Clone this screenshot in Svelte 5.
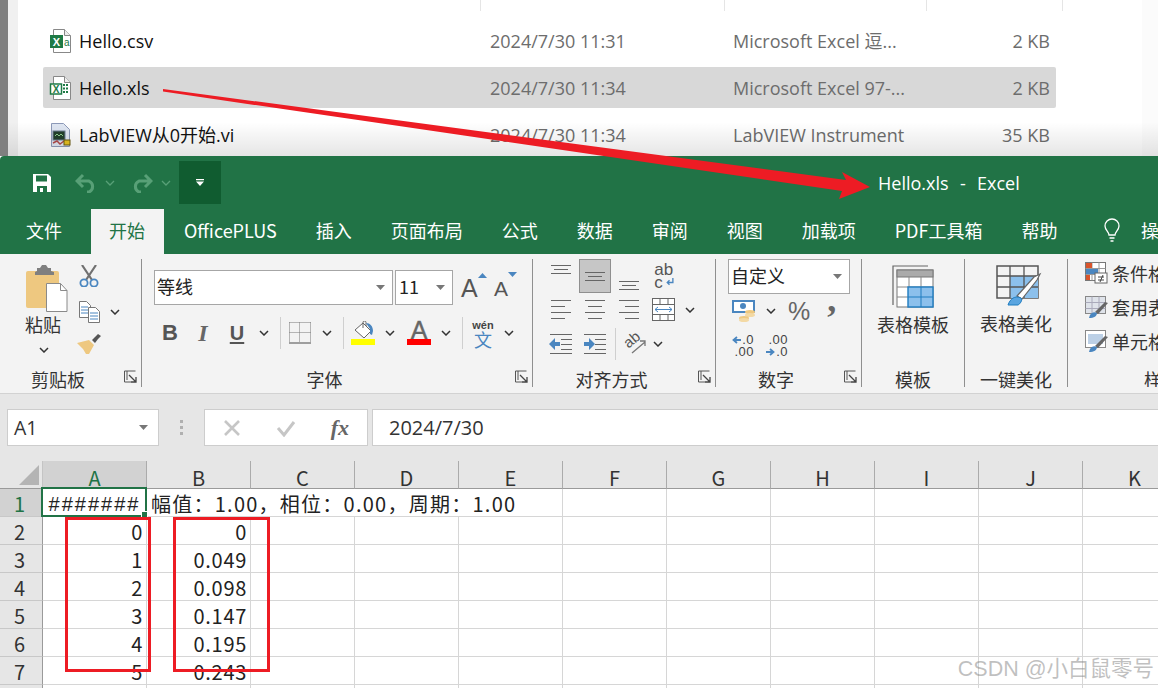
<script>
  const files = [
    { name: 'Hello.csv', date: '2024/7/30 11:31', type: 'Microsoft Excel 逗...', size: '2 KB', icon: 'csv' },
    { name: 'Hello.xls', date: '2024/7/30 11:34', type: 'Microsoft Excel 97-...', size: '2 KB', icon: 'xls', selected: true },
    { name: 'LabVIEW从0开始.vi', date: '2024/7/30 11:34', type: 'LabVIEW Instrument', size: '35 KB', icon: 'vi' }
  ];
  const tabs = ['文件', '开始', 'OfficePLUS', '插入', '页面布局', '公式', '数据', '审阅', '视图', '加载项', 'PDF工具箱', '帮助'];
  const cols = ['A', 'B', 'C', 'D', 'E', 'F', 'G', 'H', 'I', 'J', 'K'];
  const rows = [
    [2, '0', '0'],
    [3, '1', '0.049'],
    [4, '2', '0.098'],
    [5, '3', '0.147'],
    [6, '4', '0.195'],
    [7, '5', '0.243'],
    [8, '', '']
  ];
</script>

{#snippet chev()}
  <svg class="chev" width="10" height="6" viewBox="0 0 10 6"><path d="M1 1l4 4 4-4" fill="none" stroke="#333" stroke-width="1.5"/></svg>
{/snippet}

{#snippet drop()}
  <svg width="9" height="5" viewBox="0 0 9 5"><path d="M0 0h9L4.500 5z" fill="#777"/></svg>
{/snippet}

{#snippet launcher()}
  <svg class="launcher" width="13" height="13" viewBox="0 0 13 13"><path d="M.5 12V1h11M3 1v9M.5 12H7" fill="none" stroke="#555"/><path d="M5 5l7 7M12 7v5H7" fill="none" stroke="#444" stroke-width="1.300"/></svg>
{/snippet}

{#snippet lines(kind)}
  <svg width="22" height="22" viewBox="0 0 22 22">
    <g stroke="#666" stroke-width="1">
      {#if kind === 'left'}
        <path d="M1 1.500h20M1 7.500h14M1 13.500h20M1 19.500h14"/>
      {:else if kind === 'center'}
        <path d="M1 1.500h20M4 7.500h14M1 13.500h20M4 19.500h14"/>
      {:else}
        <path d="M1 1.500h20M7 7.500h14M1 13.500h20M7 19.500h14"/>
      {/if}
    </g>
  </svg>
{/snippet}

{#snippet indent(flip)}
  <svg width="24" height="22" viewBox="0 0 24 22">
    <path d="M1 1.500h22M12 6.500h11M12 11.500h11M12 16.500h11M1 20.500h22" stroke="#666" fill="none"/>
    {#if flip}
      <path d="M1 9h5V5l6 6-6 6v-4H1z" fill="#4a86c0"/>
    {:else}
      <path d="M11 9H6V5l-6 6 6 6v-4h5z" fill="#4a86c0"/>
    {/if}
  </svg>
{/snippet}

{#snippet fileIcon(kind)}
  <svg class="ficon" width="22" height="24" viewBox="0 0 22 24">
    {#if kind === 'vi'}
      <path d="M2.500.5h12l6 6v17h-18z" fill="#dfe6f2" stroke="#8d9ab8"/>
      <rect x="4" y="8" width="12" height="9" fill="#22402c" stroke="#6b7a92"/>
      <path d="M6 13l2-2 2 2 2-2 2 2" stroke="#8fd08f" fill="none"/>
      <path d="M4 20l4-2 3 3 4-3" stroke="#b04a4a" stroke-width="1.500" fill="none"/>
      <rect x="15" y="17" width="6" height="5" fill="#e6c020" stroke="#6b5a10"/>
    {:else}
      <path d="M4.500.5h11l6 6v17h-17z" fill="#fff" stroke="#888"/>
      <path d="M15.500.5v6h6" fill="#eee" stroke="#888"/>
      {#if kind === 'csv'}
        <rect x="1" y="6" width="13" height="13" fill="#1e7a45"/>
        <text x="7.500" y="16.500" class="xmark">X</text>
        <text x="15" y="17" class="amark">a</text>
      {:else}
        <rect x="1.500" y="8" width="11" height="10" fill="#fff" stroke="#1e7a45" stroke-width="1.500"/>
        <text x="7" y="16.500" class="xmark small">X</text>
        <path d="M14 8h2v2h-2zM17 8h2v2h-2zM14 11.500h2v2h-2zM17 11.500h2v2h-2zM14 15h2v2h-2zM17 15h2v2h-2z" fill="#1e7a45"/>
      {/if}
    {/if}
  </svg>
{/snippet}

<div class="page">
  <section class="explorer">
    <div class="heads"><span></span><span></span><span></span><span></span></div>
    {#each files as f}
      <div class="frow" class:selected={f.selected}>
        <span class="fname">{@render fileIcon(f.icon)}{f.name}</span>
        <span class="fdate">{f.date}</span>
        <span class="ftype">{f.type}</span>
        <span class="fsize">{f.size}</span>
      </div>
    {/each}
  </section>

  <section class="excel">
    <div class="titlebar">
      <svg class="qsave" width="20" height="20" viewBox="0 0 20 20">
        <path d="M1 1h15l3 3v15H1z" fill="#fff"/>
        <rect x="4" y="2.500" width="11" height="6" fill="#217346"/>
        <rect x="5" y="13" width="10" height="6" fill="#217346"/>
        <rect x="8" y="15" width="3" height="4" fill="#fff"/>
      </svg>
      <svg class="qundo" width="22" height="20" viewBox="0 0 22 20"><path d="M8 2L2 8l6 6M2 8h12a6 6 0 0 1 0 11h-2" fill="none" stroke="#58a077" stroke-width="3"/></svg>
      <svg class="qchev" width="10" height="6" viewBox="0 0 10 6"><path d="M1 1l4 4 4-4" fill="none" stroke="#58a077" stroke-width="1.300"/></svg>
      <svg class="qredo" width="22" height="20" viewBox="0 0 22 20"><path d="M14 2l6 6-6 6M20 8H8a6 6 0 0 0 0 11h2" fill="none" stroke="#58a077" stroke-width="3"/></svg>
      <svg class="qchev" width="10" height="6" viewBox="0 0 10 6"><path d="M1 1l4 4 4-4" fill="none" stroke="#58a077" stroke-width="1.300"/></svg>
      <div class="qmore"><svg width="8" height="7" viewBox="0 0 8 7"><path d="M0 0h8v1.200H0zM0 2.500h8L4 7z" fill="#fff"/></svg></div>
      <div class="title">Hello.xls&nbsp; - &nbsp;Excel</div>
    </div>

    <div class="tabs">
      {#each tabs as t, i}
        <div class="tab" class:active={i === 1} class:first={i === 0}>{t}</div>
      {/each}
      <svg class="bulb" width="18" height="24" viewBox="0 0 18 24"><path d="M6 17c0-3-4-5-4-9a7 7 0 0 1 14 0c0 4-4 6-4 9zM6.500 20h5M7.500 23h3" fill="none" stroke="#fff" stroke-width="1.300"/></svg>
      <div class="tab more">操</div>
    </div>

    <div class="ribbon">
      <div class="group clip">
        <div class="gbody clipbody">
          <div class="paste">
            <svg width="42" height="47" viewBox="0 0 42 47">
              <rect x="0" y="6" width="33" height="37" rx="2" fill="#eec880"/>
              <path d="M11 6V3h3l2-3h4l2 3h3v3l3 1v3H9V7z" fill="#7f7f7f"/>
              <path d="M20.500 18.500h14l6.500 7v21H20.500z" fill="#fff" stroke="#8a8a8a"/>
              <path d="M34.500 18.500v7h6.500" fill="none" stroke="#8a8a8a"/>
            </svg>
            <span class="plabel">粘贴</span>
            {@render chev()}
          </div>
          <div class="cliptools">
            <svg class="cut" width="20" height="22" viewBox="0 0 20 22">
              <path d="M3 0l10 15M17 0L7 15" stroke="#707070" stroke-width="2.200" fill="none"/>
              <circle cx="5" cy="18" r="3.600" fill="none" stroke="#4a86c0" stroke-width="1.800"/>
              <circle cx="15" cy="18" r="3.600" fill="none" stroke="#4a86c0" stroke-width="1.800"/>
            </svg>
            <div class="copyrow">
              <svg width="21" height="22" viewBox="0 0 21 22">
                <path d="M.5.5h7l4 4v12H.5z" fill="#fff" stroke="#777"/>
                <path d="M2 6h7M2 9h7M2 12h7" stroke="#4a86c0"/>
                <path d="M9.500 6.500h7l4 4v11h-11z" fill="#fff" stroke="#777"/>
                <path d="M11 12h8M11 15h8M11 18h8" stroke="#4a86c0"/>
              </svg>
              {@render chev()}
            </div>
            <svg class="brush" width="24" height="22" viewBox="0 0 24 22">
              <path d="M15 7l3-3 3-3 3 2-3 3-3 4z" fill="#555"/>
              <path d="M0 10l12-3 5 5-5 9-3 0-3-5z" fill="#eec880"/>
            </svg>
          </div>
        </div>
        <div class="glabel">剪贴板{@render launcher()}</div>
      </div>

      <div class="group font">
        <div class="gbody">
          <div class="fontrow1">
            <div class="select fontname"><span>等线</span>{@render drop()}</div>
            <div class="select fontsize"><span>11</span>{@render drop()}</div>
            <div class="grow">
              <span class="biga">A</span><svg width="9" height="5" viewBox="0 0 9 5"><path d="M0 5h9L4.500 0z" fill="#4a86c0"/></svg>
            </div>
            <div class="shrink">
              <span class="smalla">A</span><svg width="9" height="5" viewBox="0 0 9 5"><path d="M0 0h9L4.500 5z" fill="#4a86c0"/></svg>
            </div>
          </div>
          <div class="fontrow2">
            <span class="bold">B</span>
            <span class="ital">I</span>
            <span class="under">U</span>
            {@render chev()}
            <i class="vsep"></i>
            <svg width="22" height="22" viewBox="0 0 22 22">
              <path d="M.5.5h21M.5 10.500h21M.5.5v20M10.500.5v20M21.500.5v20" stroke="#777" stroke-dasharray="1 1" fill="none"/>
              <path d="M0 21h22" stroke="#666" stroke-width="1.200"/>
            </svg>
            {@render chev()}
            <i class="vsep"></i>
            <div class="swatch">
              <svg width="24" height="18" viewBox="0 0 24 18">
                <path d="M4 9l8-7 8 8-7 7z" fill="#fff" stroke="#666"/>
                <path d="M12 7V1.500a1.500 1.500 0 0 1 3 0V5" fill="none" stroke="#666"/>
                <path d="M15 2c4 0 7 3 7 8l-1 4-2-1 0-5z" fill="#4a86c0"/>
              </svg>
              <b class="bar yellow"></b>
            </div>
            {@render chev()}
            <div class="swatch">
              <span class="colora">A</span>
              <b class="bar red"></b>
            </div>
            {@render chev()}
            <i class="vsep"></i>
            <div class="wen"><small>wén</small><span>文</span></div>
            {@render chev()}
          </div>
        </div>
        <div class="glabel">字体{@render launcher()}</div>
      </div>

      <div class="group align">
        <div class="gbody">
          <div class="arow first">
            <svg class="at" width="22" height="10" viewBox="0 0 22 10"><path d="M1 1.500h20M4 5.500h14M1 9.500h20" stroke="#666"/></svg>
            <div class="acell on"><svg width="22" height="10" viewBox="0 0 22 10"><path d="M1 1.500h20M4 5.500h14M1 9.500h20" stroke="#666"/></svg></div>
            <svg class="ab" width="22" height="10" viewBox="0 0 22 10"><path d="M1 1.500h20M4 5.500h14M1 9.500h20" stroke="#666"/></svg>
            <div class="wrap"><span>ab</span><span class="c">c<svg width="9" height="9" viewBox="0 0 8 8"><path d="M7 0v4H2M4 2L2 4l2 2" fill="none" stroke="#4a86c0" stroke-width="1.200"/></svg></span></div>
          </div>
          <div class="arow second">
            {@render lines('left')}
            {@render lines('center')}
            {@render lines('right')}
            <svg width="24" height="23" viewBox="0 0 24 23">
              <rect x=".5" y=".5" width="22" height="22" fill="#fff" stroke="#666"/>
              <path d="M.5 6.500h22M.5 16.500h22M8 .5v6M16 .5v6M8 16.500v6M16 16.500v6" stroke="#666" fill="none"/>
              <path d="M3 11.500h17M6 9l-3 2.500L6 14M17 9l3 2.500L17 14" stroke="#4a86c0" fill="none"/>
            </svg>
            {@render chev()}
          </div>
          <div class="arow third">
            {@render indent(false)}
            {@render indent(true)}
            <i class="vsep"></i>
            <svg class="orienticon" width="24" height="24" viewBox="0 0 24 24">
              <text x="1" y="13" class="orient" transform="rotate(-40 8 10)">ab</text>
              <path d="M8 21L21 10M16 9h5v5" fill="none" stroke="#777" stroke-width="1.300"/>
            </svg>
            {@render chev()}
          </div>
        </div>
        <div class="glabel">对齐方式{@render launcher()}</div>
      </div>

      <div class="group number">
        <div class="gbody">
          <div class="select numfmt"><span>自定义</span>{@render drop()}</div>
          <div class="nrow">
            <svg width="24" height="22" viewBox="0 0 24 22">
              <rect x="0" y="0" width="23" height="13" fill="#4a86c0"/>
              <rect x="2" y="2" width="19" height="9" fill="#fff"/>
              <circle cx="11" cy="6" r="3" fill="#4a86c0"/>
              <ellipse cx="18" cy="12" rx="5" ry="2" fill="#eec880"/>
              <ellipse cx="18" cy="15" rx="5" ry="2" fill="#f3d9a4"/>
              <ellipse cx="12" cy="18" rx="5" ry="2" fill="#eec880"/>
              <ellipse cx="12" cy="20" rx="5" ry="2" fill="#f3d9a4"/>
            </svg>
            {@render chev()}
            <span class="pct">%</span>
            <span class="comma">,</span>
          </div>
          <div class="nrow dec">
            <div class="decimal"><span><svg width="9" height="8" viewBox="0 0 9 8"><path d="M9 4H2M5 1L1.500 4 5 7" fill="none" stroke="#4a86c0" stroke-width="1.800"/></svg>.0</span><span>.00</span></div>
            <div class="decimal"><span>.00</span><span><svg width="9" height="8" viewBox="0 0 9 8"><path d="M0 4h7M4 1l3.500 3L4 7" fill="none" stroke="#4a86c0" stroke-width="1.800"/></svg>.0</span></div>
          </div>
        </div>
        <div class="glabel">数字{@render launcher()}</div>
      </div>

      <div class="group big">
        <div class="gbody bigbody">
          <svg width="42" height="43" viewBox="0 0 42 43">
            <path d="M1 40V1h35" fill="none" stroke="#666" stroke-width="1.200"/>
            <rect x="5" y="5" width="36" height="37" fill="#fff" stroke="#777"/>
            <rect x="5" y="5" width="36" height="7" fill="#aaa" stroke="#777"/>
            <path d="M5 22h36M5 32h36M17 12v30M29 12v30" stroke="#888"/>
            <rect x="16" y="22" width="25" height="20" fill="#8cc0ec" stroke="#1f7cc0" stroke-width="1.400"/>
            <path d="M16 32h25M29 22v20" stroke="#1f7cc0"/>
          </svg>
          <span class="biglabel">表格模板</span>
        </div>
        <div class="glabel">模板</div>
      </div>

      <div class="group big">
        <div class="gbody bigbody">
          <svg class="beauty" width="46" height="42" viewBox="0 0 46 42">
            <rect x="1" y="1" width="41" height="32" fill="none" stroke="#555" stroke-width="1.500"/>
            <rect x="14" y="11" width="28" height="22" fill="#8cc0ec"/>
            <path d="M1 11h41M1 22h41M14 1v32M28 1v32" stroke="#555" stroke-width="1.300"/>
            <path d="M21 31L38 12l6-3-3 6-15 19z" fill="#fff" stroke="#666" stroke-width="1.200"/>
            <path d="M12 40c2-6 7-10 13-7 2 2-1 6-3 7z" fill="#5aa5e0" stroke="#1f7cc0"/>
          </svg>
          <span class="biglabel">表格美化</span>
        </div>
        <div class="glabel">一键美化</div>
      </div>

      <div class="group styles">
        <div class="gbody stylebody">
          <div class="srow">
            <svg width="23" height="22" viewBox="0 0 23 22">
              <rect x=".5" y=".5" width="20" height="18" fill="#fff" stroke="#777"/>
              <path d="M.5 6.500h20M.5 12.500h20M7 .5v18M14 .5v18" stroke="#999"/>
              <rect x="1" y="1" width="6" height="5" fill="#d9542b"/>
              <rect x="1" y="7" width="12" height="5" fill="#4a86c0"/>
              <rect x="1" y="13" width="4" height="5" fill="#d9542b"/>
              <rect x="10" y="11" width="12" height="10" fill="#fff" stroke="#666"/>
              <path d="M13 15h6M13 18h6M18 13l-3 7" stroke="#444" fill="none"/>
            </svg>
            <span>条件格式</span>
          </div>
          <div class="srow">
            <svg width="23" height="22" viewBox="0 0 23 22">
              <rect x=".5" y=".5" width="20" height="17" fill="#dfe3ea" stroke="#888"/>
              <path d="M.5 6.500h20M.5 12.500h20M7 .5v17M14 .5v17" stroke="#aab"/>
              <path d="M10 16l10-10 3 1-10 11z" fill="#666"/>
              <path d="M4 22c1-5 4-7 8-5 0 3-3 5-8 5z" fill="#4a86c0"/>
            </svg>
            <span>套用表格</span>
          </div>
          <div class="srow">
            <svg width="23" height="22" viewBox="0 0 23 22">
              <rect x=".5" y=".5" width="20" height="17" fill="#fff" stroke="#888"/>
              <rect x="3" y="4" width="15" height="10" fill="#bcd0e6"/>
              <path d="M10 16l10-10 3 1-10 11z" fill="#666"/>
              <path d="M4 22c1-5 4-7 8-5 0 3-3 5-8 5z" fill="#4a86c0"/>
            </svg>
            <span>单元格样</span>
          </div>
        </div>
        <div class="glabel">样</div>
      </div>
    </div>

    <div class="formula">
      <div class="namebox"><span>A1</span>{@render drop()}</div>
      <div class="dots"><i></i><i></i><i></i></div>
      <div class="fxbox">
        <svg width="20" height="18" viewBox="0 0 20 18"><path d="M3 2l14 14M17 2L3 16" stroke="#c6c6c6" stroke-width="2.600"/></svg>
        <svg width="20" height="18" viewBox="0 0 20 18"><path d="M2 9l6 7L18 3" fill="none" stroke="#c6c6c6" stroke-width="3"/></svg>
        <span class="fx">fx</span>
      </div>
      <div class="input">2024/7/30</div>
    </div>

    <div class="sheet">
      <div class="corner"><svg width="20" height="20" viewBox="0 0 20 20"><path d="M20 0v20H0z" fill="#b4b4b4"/></svg></div>
      {#each cols as c, i}
        <div class="colhead" class:on={i === 0}>{c}</div>
      {/each}

      <div class="rowhead on">1</div>
      <div class="cell a1">#######<i class="cursor"><b></b></i></div>
      <div class="cell note">幅值：1.00，相位：0.00，周期：1.00</div>
      {#each cols.slice(5) as c}<div class="cell"></div>{/each}

      {#each rows as r}
        <div class="rowhead">{r[0]}</div>
        <div class="cell num">{r[1]}</div>
        <div class="cell num">{r[2]}</div>
        {#each cols.slice(2) as c}<div class="cell"></div>{/each}
      {/each}
    </div>
  </section>

  <!-- annotations drawn on top of the screenshot -->
  <svg class="arrow" width="1158" height="688" viewBox="0 0 1158 688">
    <path d="M163 89L846 180 842 172 870 187 839 199 842 191 163 91.500z" fill="#ed1c24"/>
  </svg>
  <div class="mark markA"></div>
  <div class="mark markB"></div>
  <div class="watermark">CSDN @小白鼠零号</div>
</div>

<style>
  :global(body) {
    margin: 0;
  }

  .page {
    position: relative;
    width: 1158px;
    height: 688px;
    overflow: hidden;
    background: #fff;
    font-family: "Open Sans", "Noto Sans CJK SC", sans-serif;
    color: #222;
  }

  /* explorer window behind excel */
  .explorer {
    position: relative;
    height: 156px;
    padding-left: 18px;
    box-sizing: border-box;
    border-left: 8px solid #7f7f7f;
    background: #fff;
    box-shadow: inset 10px 0 0 #f0f0f0, inset -16px 0 0 #fbfbfb;
  }

  .explorer::after {
    content: '';
    position: absolute;
    left: 0;
    right: 0;
    bottom: 0;
    height: 34px;
    background: linear-gradient(rgba(0, 0, 0, 0), rgba(0, 0, 0, 0.1));
  }

  .heads {
    height: 20px;
    margin-left: 17px;
    display: flex;
  }

  .heads span {
    height: 11px;
    border-right: 1px solid #e5e5e5;
  }

  .heads span:nth-child(1) {
    width: 437px;
  }

  .heads span:nth-child(2) {
    width: 243px;
  }

  .heads span:nth-child(3) {
    width: 201px;
  }

  .heads span:nth-child(4) {
    width: 135px;
  }

  .frow {
    display: grid;
    grid-template-columns: 447px 243px 247px 70px;
    align-items: center;
    width: 1013px;
    height: 41px;
    margin: 0 0 6px 17px;
    font-size: 18px;
    line-height: 38px;
    border-radius: 2px;
  }

  .frow.selected {
    background: #d8d8d8;
  }

  .fname {
    display: flex;
    align-items: center;
    color: #111;
    padding-left: 6px;
  }

  .ficon {
    margin-right: 8px;
    flex: none;
  }

  .fdate,
  .ftype,
  .fsize {
    color: #6d6d6d;
    white-space: nowrap;
  }

  .fsize {
    text-align: right;
  }

  .xmark {
    font: bold 11px "Liberation Sans", sans-serif;
    fill: #fff;
    text-anchor: middle;
  }

  .xmark.small {
    fill: #1e7a45;
    font-size: 10px;
  }

  .amark {
    font: 10px "Liberation Sans", sans-serif;
    fill: #1e7a45;
  }

  /* excel window */
  .excel {
    font-family: "Noto Sans CJK SC", sans-serif;
  }

  .titlebar {
    display: flex;
    align-items: center;
    height: 53px;
    padding-left: 32px;
    box-sizing: border-box;
    background: #217346;
    border-radius: 4px 0 0 0;
    color: #fff;
  }

  .qundo {
    margin-left: 23px;
  }

  .qredo {
    margin-left: 16px;
  }

  .qchev {
    margin-left: 8px;
  }

  .qmore {
    width: 42px;
    height: 43px;
    margin-left: 8px;
    background: #105c30;
    display: flex;
    align-items: center;
    justify-content: center;
  }

  .title {
    margin-left: 657px;
    font-size: 18px;
    word-spacing: 1px;
    font-family: "Open Sans", sans-serif;
    white-space: nowrap;
  }

  .tabs {
    display: flex;
    align-items: stretch;
    height: 45px;
    padding-left: 6.5px;
    background: #217346;
    color: #fff;
    font-size: 18px;
    overflow: hidden;
  }

  .tab {
    padding: 0 19.5px;
    line-height: 43px;
    white-space: nowrap;
  }

  .tab.first {
    margin-right: 9px;
  }

  .tab.active {
    background: #f3f3f3;
    color: #217346;
    padding: 0 18.5px;
    margin-right: 1px;
  }

  .tab.more {
    padding: 0 0 0 20px;
  }

  .bulb {
    margin: 9px 0 0 26px;
    flex: none;
  }

  /* ribbon */
  .ribbon {
    display: flex;
    height: 140px;
    box-sizing: border-box;
    padding: 5px 0 6px;
    background: #f3f3f3;
    border-bottom: 1px solid #d2d2d2;
    color: #333;
  }

  .group {
    position: relative;
    display: flex;
    flex-direction: column;
    flex: none;
    box-sizing: border-box;
    border-right: 1px solid #8f8f8f;
  }

  .clip {
    width: 142px;
  }

  .font {
    width: 391px;
  }

  .align {
    width: 183px;
  }

  .number {
    width: 146px;
  }

  .big {
    width: 103px;
  }

  .styles {
    flex: 1;
    border-right: 0;
    overflow: hidden;
  }

  .gbody {
    flex: 1;
    min-height: 0;
  }

  .glabel {
    position: relative;
    height: 24px;
    line-height: 24px;
    top: 4px;
    text-align: center;
    font-size: 18px;
    white-space: nowrap;
  }

  .launcher {
    position: absolute;
    right: 4px;
    top: 3px;
  }

  .clip .glabel,
  .font .glabel,
  .align .glabel,
  .number .glabel {
    padding-right: 25px;
  }

  .styles .glabel {
    text-align: left;
    padding-left: 76px;
  }

  .clipbody {
    display: flex;
    padding: 6px 0 0 26px;
  }

  .paste {
    display: flex;
    flex-direction: column;
    align-items: flex-start;
    width: 52px;
  }

  .plabel {
    font-size: 18px;
    line-height: 24px;
    margin: 0 0 11px -1px;
  }

  .paste .chev {
    margin-left: 13px;
  }

  .cliptools {
    display: flex;
    flex-direction: column;
    align-items: flex-start;
    padding-left: 1px;
  }

  .cut {
    margin: 0 0 14px 0;
  }

  .copyrow {
    display: flex;
    align-items: center;
    gap: 10px;
  }

  .brush {
    margin: 10px 0 0 -2px;
  }

  .select {
    display: flex;
    align-items: center;
    justify-content: space-between;
    box-sizing: border-box;
    height: 35px;
    padding: 0 7px 0 2px;
    background: #fff;
    border: 1px solid #a6a6a6;
    font-size: 18px;
    color: #222;
  }

  .select span {
    position: relative;
    top: -2px;
  }

  .fontrow1 {
    display: flex;
    align-items: center;
    margin: 11px 0 0 12px;
  }

  .fontname {
    width: 239px;
  }

  .fontsize {
    width: 58px;
    margin-left: 2px;
    padding-left: 3px;
  }

  .grow,
  .shrink {
    display: flex;
    align-items: flex-start;
    color: #555;
    font-family: "Liberation Sans", sans-serif;
  }

  .grow {
    width: 33px;
    margin-left: 8px;
  }

  .shrink {
    width: 30px;
  }

  .biga {
    font-size: 25px;
    line-height: 30px;
  }

  .smalla {
    font-size: 21px;
    line-height: 30px;
    margin-top: 2px;
  }

  .fontrow2 {
    display: grid;
    grid-template-columns: 32px 34px 34px 20px 12px 28px 26px 6px 34px 20px 38px 16px 16px 26px 26px;
    align-items: center;
    justify-items: center;
    height: 36px;
    margin: 10px 0 0 12px;
    color: #555;
    font-family: "Liberation Sans", sans-serif;
    font-size: 22px;
  }

  .bold {
    font-weight: bold;
  }

  .ital {
    font-style: italic;
    font-weight: bold;
    font-family: "Liberation Serif", serif;
    font-size: 24px;
    color: #666;
  }

  .under {
    text-decoration: underline;
    text-underline-offset: 2px;
    font-weight: bold;
    font-size: 20px;
  }

  .vsep {
    display: block;
    width: 1px;
    height: 32px;
    background: #cfcfcf;
  }

  .swatch {
    display: flex;
    flex-direction: column;
    align-items: center;
    width: 24px;
  }

  .colora {
    font-size: 25px;
    line-height: 18px;
    color: #666;
    -webkit-text-stroke: 0.4px #666;
  }

  .bar {
    display: block;
    width: 24px;
    height: 6px;
  }

  .yellow {
    background: #ffff00;
  }

  .red {
    background: #ff0000;
  }

  .wen {
    display: flex;
    flex-direction: column;
    align-items: center;
    line-height: 1;
  }

  .wen small {
    font-size: 11px;
    color: #444;
    font-weight: bold;
  }

  .wen span {
    font: 18px/16px "Noto Sans CJK SC", sans-serif;
    color: #4a86c0;
  }

  .arow {
    display: grid;
    align-items: center;
    justify-items: center;
    margin-left: 11px;
  }

  .first {
    grid-template-columns: 34px 34px 34px 36px;
    height: 34px;
  }

  .second {
    grid-template-columns: 34px 34px 34px 36px 16px;
    height: 33px;
  }

  .third {
    grid-template-columns: 34px 34px 6px 36px 8px;
    height: 35px;
  }

  .orienticon {
    overflow: visible;
  }

  .at {
    align-self: start;
    margin-top: 5px;
  }

  .ab {
    align-self: end;
    margin-bottom: 3px;
  }

  .acell {
    display: flex;
    align-items: center;
    justify-content: center;
    box-sizing: border-box;
    width: 32px;
    height: 34px;
    background: #c6c6c6;
    border: 1px solid #8f8f8f;
  }

  .wrap {
    display: flex;
    flex-direction: column;
    font: 17px/13px "Liberation Sans", sans-serif;
    color: #555;
  }

  .wrap .c {
    display: flex;
    align-items: center;
    gap: 2px;
  }

  .orient {
    font: 15px "Liberation Sans", sans-serif;
    fill: #555;
  }

  .numfmt {
    width: 122px;
    margin-left: 12px;
  }

  .nrow {
    display: flex;
    align-items: center;
    height: 34px;
    margin: 0 0 0 16px;
    color: #666;
    font-family: "Liberation Sans", sans-serif;
  }

  .nrow .chev {
    margin-left: 10px;
  }

  .pct {
    margin-left: 12px;
    font-size: 25px;
  }

  .comma {
    margin-left: 17px;
    font-family: "Liberation Serif", serif;
    font-size: 36px;
    font-weight: bold;
    line-height: 20px;
    padding-bottom: 24px;
  }

  .dec {
    gap: 12px;
    height: 36px;
  }

  .decimal {
    display: flex;
    flex-direction: column;
    align-items: flex-end;
    font-size: 13px;
    line-height: 12px;
    color: #444;
    width: 22px;
  }

  .decimal span {
    display: flex;
    align-items: center;
    gap: 1px;
    letter-spacing: 0.5px;
  }

  .bigbody {
    display: flex;
    flex-direction: column;
    align-items: center;
    padding-top: 6px;
  }

  .biglabel {
    font-size: 18px;
    line-height: 24px;
    margin-top: 4px;
    white-space: nowrap;
  }

  .beauty {
    margin-left: 6px;
  }

  .stylebody {
    margin-top: -3px;
    padding-left: 17px;
  }

  .srow {
    display: flex;
    align-items: center;
    gap: 4px;
    height: 34px;
    font-size: 18px;
    line-height: 30px;
    white-space: nowrap;
  }

  .srow svg {
    flex: none;
  }

  /* formula bar */
  .formula {
    display: flex;
    box-sizing: border-box;
    height: 67px;
    padding: 15px 0 0 7px;
    background: #e6e6e6;
  }

  .namebox,
  .fxbox,
  .input {
    box-sizing: border-box;
    height: 37px;
    background: #fff;
    border: 1px solid #cdcdcd;
    display: flex;
    align-items: center;
    color: #333;
  }

  .namebox {
    width: 152px;
    justify-content: space-between;
    padding: 0 10px 0 6px;
    font-size: 19.5px;
    font-family: "Open Sans", sans-serif;
  }

  .dots {
    display: flex;
    flex-direction: column;
    justify-content: center;
    gap: 3px;
    width: 45px;
    height: 37px;
    align-items: center;
  }

  .dots i {
    width: 3px;
    height: 3px;
    background: #b0b0b0;
  }

  .fxbox {
    width: 164px;
    padding: 0 18px 0 17px;
    justify-content: space-between;
  }

  .fx {
    font: italic bold 22px "Liberation Serif", serif;
    color: #666;
  }

  .input {
    flex: 1;
    margin-left: 4px;
    padding-left: 16px;
    border-right: 0;
    font-size: 20px;
    font-family: "Open Sans", sans-serif;
  }

  /* sheet */
  .sheet {
    display: grid;
    grid-template-columns: 43px repeat(11, 104px);
    grid-auto-rows: 28px;
    background: #fff;
    font-family: "Noto Sans CJK SC", sans-serif;
    font-size: 20px;
    color: #222;
  }

  .corner {
    display: flex;
    justify-content: flex-end;
    align-items: center;
    padding-right: 3px;
    background: #e6e6e6;
    border-bottom: 1px solid #9a9a9a;
    border-right: 1px solid #c4c4c4;
    box-sizing: border-box;
  }

  .colhead {
    text-align: center;
    line-height: 33px;
    background: #e6e6e6;
    border-right: 1px solid #ababab;
    border-bottom: 1px solid #9a9a9a;
    box-sizing: border-box;
    color: #333;
  }

  .colhead.on {
    background: #d2d2d2;
    color: #217346;
  }

  .rowhead {
    text-align: center;
    line-height: 30px;
    background: #e6e6e6;
    border-right: 1px solid #9a9a9a;
    border-bottom: 1px solid #c8c8c8;
    box-sizing: border-box;
    color: #333;
    padding-right: 3px;
  }

  .rowhead.on {
    background: #d2d2d2;
    color: #217346;
  }

  .cell {
    box-sizing: border-box;
    border-right: 1px solid #d6d6d6;
    border-bottom: 1px solid #d6d6d6;
    line-height: 30px;
    white-space: nowrap;
  }

  .num {
    text-align: right;
    padding-right: 3px;
    letter-spacing: 0.7px;
  }

  .a1 {
    position: relative;
    text-align: center;
    font-family: "Liberation Sans", sans-serif;
    letter-spacing: 2px;
  }

  .cursor {
    position: absolute;
    left: -2px;
    top: -2px;
    width: 106px;
    height: 30px;
    box-sizing: border-box;
    border: 2px solid #217346;
  }

  .cursor b {
    position: absolute;
    right: -3px;
    bottom: -3px;
    width: 5px;
    height: 5px;
    background: #217346;
    border: 1px solid #fff;
    box-sizing: content-box;
  }

  .note {
    grid-column: span 4;
    padding-left: 4px;
    letter-spacing: 1.25px;
  }

  /* annotations */
  .arrow {
    position: absolute;
    left: 0;
    top: 0;
    pointer-events: none;
  }

  .mark {
    position: absolute;
    top: 517px;
    height: 155px;
    box-sizing: border-box;
    border: 3px solid #ed1c24;
  }

  .markA {
    left: 65px;
    width: 86px;
  }

  .markB {
    left: 173px;
    width: 97px;
  }

  .watermark {
    position: absolute;
    right: 4px;
    top: 655px;
    font-size: 21.5px;
    line-height: 28px;
    color: rgba(130, 130, 130, 0.5);
    font-family: "Liberation Sans", "Noto Sans CJK SC", sans-serif;
    white-space: nowrap;
  }
</style>
